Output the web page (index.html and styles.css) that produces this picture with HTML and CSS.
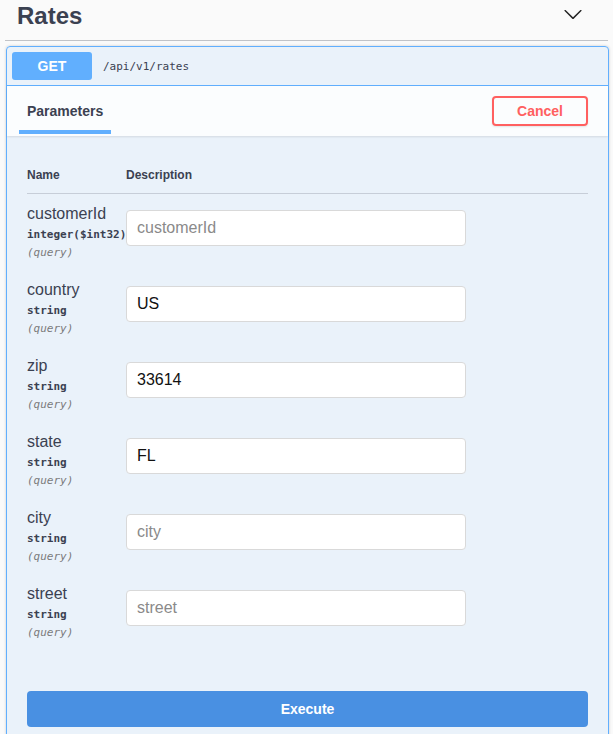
FILE: index.html
```html
<!DOCTYPE html>
<html lang="en">
<head>
<meta charset="utf-8">
<title>Rates</title>
<link rel="stylesheet" href="styles.css">
</head>
<body>
<div class="wrapper">
  <div class="tag">
    <h3 class="tag-title">Rates</h3>
    <svg class="chevron" width="20" height="20" viewBox="0 0 20 20" aria-hidden="true"><path d="M17.418 6.109c.272-.268.709-.268.979 0s.271.701 0 .969l-7.908 7.83c-.27.268-.707.268-.979 0l-7.908-7.83c-.27-.268-.27-.701 0-.969.271-.268.709-.268.979 0L10 13.25l7.418-7.141z"/></svg>
  </div>

  <div class="opblock">
    <div class="summary">
      <span class="method">GET</span>
      <span class="path">/api/v1/rates</span>
    </div>

    <div class="tab-header">
      <div class="tab">
        <h4 class="tab-title">Parameters</h4>
        <span class="tab-bar"></span>
      </div>
      <button class="btn-cancel">Cancel</button>
    </div>

    <div class="table-container">
      <div class="thead">
        <div class="th th-name">Name</div>
        <div class="th">Description</div>
      </div>

      <div class="prow">
        <div class="pname">
          <div class="name">customerId</div>
          <div class="ptype">integer($int32)</div>
          <div class="pin">(query)</div>
        </div>
        <input class="pinput" type="text" placeholder="customerId">
      </div>

      <div class="prow">
        <div class="pname">
          <div class="name">country</div>
          <div class="ptype">string</div>
          <div class="pin">(query)</div>
        </div>
        <input class="pinput" type="text" placeholder="country" value="US">
      </div>

      <div class="prow">
        <div class="pname">
          <div class="name">zip</div>
          <div class="ptype">string</div>
          <div class="pin">(query)</div>
        </div>
        <input class="pinput" type="text" placeholder="zip" value="33614">
      </div>

      <div class="prow">
        <div class="pname">
          <div class="name">state</div>
          <div class="ptype">string</div>
          <div class="pin">(query)</div>
        </div>
        <input class="pinput" type="text" placeholder="state" value="FL">
      </div>

      <div class="prow">
        <div class="pname">
          <div class="name">city</div>
          <div class="ptype">string</div>
          <div class="pin">(query)</div>
        </div>
        <input class="pinput" type="text" placeholder="city">
      </div>

      <div class="prow">
        <div class="pname">
          <div class="name">street</div>
          <div class="ptype">string</div>
          <div class="pin">(query)</div>
        </div>
        <input class="pinput" type="text" placeholder="street">
      </div>
    </div>

    <div class="execute-wrapper">
      <button class="btn-execute">Execute</button>
    </div>
  </div>
</div>
</body>
</html>
```

FILE: styles.css
```css
html, body {
  margin: 0;
  padding: 0;
  overflow: hidden;
}

body {
  background: #fafafa;
  font-family: "Liberation Sans", Arial, sans-serif;
  color: #3b4151;
}

.wrapper {
  padding: 0 5px;
}

.tag {
  display: flex;
  justify-content: space-between;
  align-items: flex-start;
  padding: 2px 25px 10px 12px;
  border-bottom: 1px solid #c1c3c7;
}

.tag-title {
  margin: 0;
  font-size: 24px;
  line-height: 28px;
  font-weight: 700;
  color: #3b4151;
}

.chevron {
  margin-top: 2px;
  fill: #222;
}

.opblock {
  margin: 5px -1px 0 1px;
  border: 1px solid #61affe;
  border-radius: 4px;
  background: rgba(97, 175, 254, 0.1);
  box-shadow: 0 0 3px rgba(0, 0, 0, 0.19);
}

.summary {
  display: flex;
  align-items: center;
  padding: 5px;
  border-bottom: 1px solid #61affe;
}

.method {
  width: 80px;
  padding: 6px 0;
  font-size: 14px;
  line-height: 16px;
  font-weight: 700;
  text-align: center;
  color: #fff;
  background: #61affe;
  border-radius: 3px;
}

.path {
  padding: 0 11px;
  font-family: "DejaVu Sans Mono", monospace;
  font-size: 11px;
  color: #3b4151;
}

.tab-header {
  display: flex;
  justify-content: space-between;
  align-items: flex-start;
  padding: 0 20px;
  min-height: 50px;
  box-sizing: border-box;
  background: rgba(255, 255, 255, 0.8);
  box-shadow: 0 1px 2px rgba(0, 0, 0, 0.1);
}

.tab {
  display: flex;
  flex-direction: column;
  padding-top: 17px;
}

.tab-title {
  margin: 0;
  font-size: 14px;
  line-height: 16px;
  font-weight: 700;
  color: #3b4151;
}

.tab-bar {
  height: 4px;
  margin: 11px -8px 2px;
  background: #61affe;
}

.btn-cancel {
  margin-top: 10px;
  padding: 5px 23px;
  font-family: "Liberation Sans", Arial, sans-serif;
  font-size: 14px;
  line-height: 16px;
  font-weight: 700;
  color: #ff6060;
  background: transparent;
  border: 2px solid #ff6060;
  border-radius: 4px;
  box-shadow: 0 1px 2px rgba(0, 0, 0, 0.1);
}

.table-container {
  padding: 20px 20px 20px;
}

.thead {
  display: grid;
  grid-template-columns: 99px 1fr;
  border-bottom: 1px solid rgba(59, 65, 81, 0.2);
}

.th {
  padding: 12px 0 11px;
  font-size: 12px;
  line-height: 14px;
  font-weight: 700;
  color: #3b4151;
}

.prow {
  display: grid;
  grid-template-columns: 99px 1fr;
  align-items: start;
  height: 76px;
  box-sizing: border-box;
  padding-top: 11px;
}

.pname {
  white-space: nowrap;
}

.name {
  font-size: 16px;
  line-height: 18px;
  color: #3b4151;
}

.ptype {
  margin-top: 3px;
  font-family: "DejaVu Sans Mono", monospace;
  font-size: 11px;
  line-height: 18px;
  font-weight: 700;
  color: #3b4151;
}

.pin {
  font-family: "DejaVu Sans Mono", monospace;
  font-size: 11px;
  line-height: 18px;
  font-style: italic;
  color: #7a7a7a;
}

.pinput {
  width: 340px;
  height: 36px;
  box-sizing: border-box;
  margin: 5px 0 0;
  padding: 0 10px;
  font-family: "Liberation Sans", Arial, sans-serif;
  font-size: 16px;
  color: #111;
  background: #fff;
  border: 1px solid #d9d9d9;
  border-radius: 4px;
  outline: none;
}

.pinput::placeholder {
  color: #8a8a8a;
}

.execute-wrapper {
  padding: 21px 20px 20px;
}

.btn-execute {
  display: block;
  width: 100%;
  height: 36px;
  font-family: "Liberation Sans", Arial, sans-serif;
  font-size: 14px;
  font-weight: 700;
  color: #fff;
  background: #4990e2;
  border: none;
  border-radius: 4px;
}
```
